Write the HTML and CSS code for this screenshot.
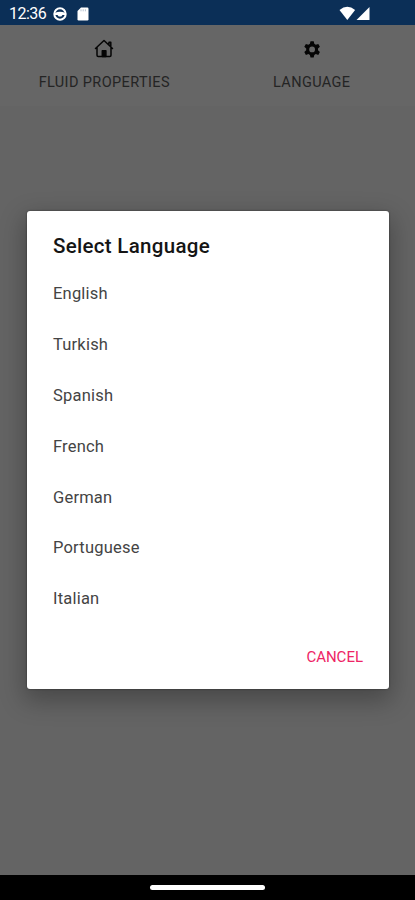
FILE: index.html
```html
<!DOCTYPE html>
<html lang="en">
<head>
<meta charset="utf-8">
<meta name="viewport" content="width=device-width, initial-scale=1">
<title>Fluid Properties</title>
<link rel="stylesheet" href="styles.css">
</head>
<body>
<div class="screen">
  <header class="status">
    <span class="clock">12:36</span>
    <svg class="badge-icon" width="14" height="14" viewBox="0 0 14 14"><circle cx="7" cy="7" r="5.7" fill="none" stroke="#fff" stroke-width="2"/><path d="M2 5.800q5-2.200 10 0v2.200H9.500L8.300 9.500H5.700L4.500 8H2z" fill="#fff"/></svg>
    <svg class="sd-icon" width="12" height="14" viewBox="0 0 12 14"><path d="M4 0.500h6.300q1.200 0 1.200 1.200v10.600q0 1.200-1.200 1.200H1.700q-1.200 0-1.200-1.200V4z" fill="#fff"/><path d="M4 2.300v2M6.200 2.300v2M8.400 2.300v2" stroke="#a5b3c3" stroke-width=".8"/></svg>
    <svg class="signal" width="32" height="15" viewBox="0 0 32 15"><path d="M.5 4Q8.300-2.500 16.100 4L8.300 14z" fill="#fff"/><path d="M30.500 1v13H17.500z" fill="#fff"/></svg>
  </header>
  <nav class="tabs">
    <div class="tab">
      <svg width="20" height="20" viewBox="0 0 20 20" fill="none" stroke="#050505" stroke-width="1.500" stroke-linejoin="round" stroke-linecap="round"><path d="M1.500 9.500 10 1.500l8.500 8M3 8.500v7.800q0 1.200 1.200 1.200h11.600q1.200 0 1.200-1.200V8.500M15 5.500V3.200h1.800v4"/><path d="M8.300 17.500v-5.800h3.600v5.800z" fill="#050505"/></svg>
      <span>FLUID PROPERTIES</span>
    </div>
    <div class="tab">
      <svg width="20" height="20" viewBox="0 -.8 20 20"><path fill="#050505" fill-rule="evenodd" d="M8.500 1.500h3.200l.6 2.500 1.500.9 2.500-.8 1.600 2.800-1.900 1.800v1.800l1.900 1.800-1.600 2.800-2.500-.8-1.500.9-.6 2.500H8.500L7.900 15.200l-1.500-.9-2.500.8-1.600-2.800 1.900-1.800V8.700L2.300 6.900l1.600-2.800 2.500.8L7.900 4zM10.100 6.700a2.900 2.900 0 1 0 0 5.800 2.900 2.900 0 0 0 0-5.800z"/></svg>
      <span>LANGUAGE</span>
    </div>
  </nav>
  <main class="content">
    <section class="dialog" role="dialog" aria-labelledby="title">
      <h1 id="title">Select Language</h1>
      <ul>
        <li>English</li>
        <li>Turkish</li>
        <li>Spanish</li>
        <li>French</li>
        <li>German</li>
        <li>Portuguese</li>
        <li>Italian</li>
      </ul>
      <button type="button">CANCEL</button>
    </section>
  </main>
  <footer class="navbar"><div class="handle"></div></footer>
</div>
</body>
</html>
```

FILE: styles.css
```css
* { box-sizing: border-box; }
body { margin: 0; font-family: Roboto, "Liberation Sans", sans-serif; }
.screen { width: 415px; height: 900px; display: flex; flex-direction: column; background: #646464; overflow: hidden; }
.status { height: 25px; flex: none; display: flex; align-items: center; background: #0b2f57; padding: 2px 44px 0 9px; color: #fff; }
.clock { width: 44px; font-size: 16px; line-height: 20px; letter-spacing: -0.5px; }
.sd-icon { margin-left: 10px; }
.signal { margin-left: auto; }
.tabs { height: 81px; flex: none; display: grid; grid-template-columns: 1fr 1fr; background: #666; }
.tab { display: flex; flex-direction: column; align-items: center; padding: 14px 0 0 1px; color: #242424; font-size: 14.5px; font-weight: 400; line-height: 18px; letter-spacing: 0.38px; }
.tab span { margin-top: 15px; white-space: nowrap; }
.content { flex: 1; padding: 105px 26px 0 27px; }
.dialog { height: 478px; display: flex; flex-direction: column; background: #fff; border-radius: 3px; padding: 22px 26px 0; box-shadow: 0 0 2px rgba(0,0,0,.5), 0 9px 24px 3px rgba(0,0,0,.28); }
h1 { margin: 0; font-size: 20.5px; line-height: 27px; font-weight: 500; letter-spacing: 0.3px; color: #151515; }
ul { list-style: none; margin: 8.4px 0 0; padding: 0; }
li { height: 50.8px; line-height: 51px; font-size: 16.5px; letter-spacing: 0.2px; color: #444; }
button { align-self: flex-end; margin-top: 22.6px; padding: 0; border: 0; background: none; font: 400 15px/20px Roboto, "Liberation Sans", sans-serif; color: #ee2465; }
.navbar { height: 25px; flex: none; display: flex; justify-content: center; background: #000; padding-top: 10px; }
.handle { width: 115px; height: 5px; border-radius: 3px; background: #fff; }
```
